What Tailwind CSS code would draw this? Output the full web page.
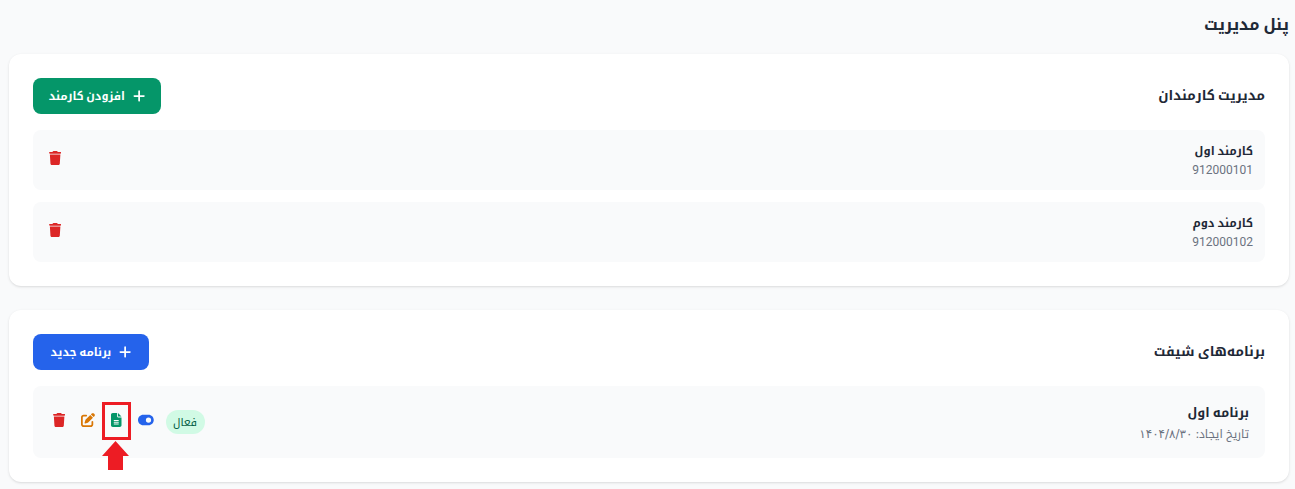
<!DOCTYPE html>
<html lang="fa" dir="rtl">
<head>
<meta charset="utf-8">
<script src="https://cdn.jsdelivr.net/npm/@tailwindcss/browser@4"></script>
</head>
<body class="bg-[#f9fafb] font-['Inter','Noto_Kufi_Arabic','Noto_Sans',sans-serif] text-[#1f2937]">
<div class="relative h-[489px] overflow-hidden pl-[9px] pr-[6px]">
  <h1 class="h-[54px] pt-[10px] text-base leading-7 font-bold">پنل مدیریت</h1>

  <section class="bg-white rounded-xl shadow-sm p-6 mb-6">
    <div class="flex items-center justify-between mb-4">
      <h2 class="text-[13.5px] font-bold mb-[2px]">مدیریت کارمندان</h2>
      <button class="h-9 w-[128px] flex items-center justify-center gap-2 rounded-lg bg-[#059669] text-white text-[11.25px] font-bold">
        <svg class="w-[12.25px] h-[14px]" viewBox="0 0 448 512" fill="currentColor"><path d="M256 80c0-17.7-14.3-32-32-32s-32 14.3-32 32V224H48c-17.7 0-32 14.3-32 32s14.3 32 32 32H192V432c0 17.7 14.3 32 32 32s32-14.3 32-32V288H400c17.7 0 32-14.3 32-32s-14.3-32-32-32H256V80z"/></svg>
        <span>افزودن کارمند</span>
      </button>
    </div>
    <div class="flex flex-col gap-3">
      <div class="h-[60px] flex items-center justify-between rounded-lg bg-[#f9fafb] p-3">
        <div>
          <div class="text-[11.5px] leading-[18px] mb-[2px] font-bold">کارمند اول</div>
          <div class="font-['Roboto',sans-serif] text-xs leading-4 text-[#6b7280]">912000101</div>
        </div>
        <button class="p-1 mb-1 text-[#dc2626]"><svg class="block h-[14px] w-[12.25px]" viewBox="0 0 448 512" fill="currentColor"><path d="M135.2 17.7L128 32H32C14.3 32 0 46.3 0 64S14.3 96 32 96H416c17.7 0 32-14.3 32-32s-14.3-32-32-32H320l-7.2-14.3C307.4 6.8 296.3 0 284.2 0H163.8c-12.1 0-23.2 6.8-28.6 17.7zM416 128H32L53.2 467c1.6 25.3 22.6 45 47.9 45H346.9c25.3 0 46.3-19.7 47.9-45L416 128z"/></svg></button>
      </div>
      <div class="h-[60px] flex items-center justify-between rounded-lg bg-[#f9fafb] p-3">
        <div>
          <div class="text-[11.5px] leading-[18px] mb-[2px] font-bold">کارمند دوم</div>
          <div class="font-['Roboto',sans-serif] text-xs leading-4 text-[#6b7280]">912000102</div>
        </div>
        <button class="p-1 mb-1 text-[#dc2626]"><svg class="block h-[14px] w-[12.25px]" viewBox="0 0 448 512" fill="currentColor"><path d="M135.2 17.7L128 32H32C14.3 32 0 46.3 0 64S14.3 96 32 96H416c17.7 0 32-14.3 32-32s-14.3-32-32-32H320l-7.2-14.3C307.4 6.8 296.3 0 284.2 0H163.8c-12.1 0-23.2 6.8-28.6 17.7zM416 128H32L53.2 467c1.6 25.3 22.6 45 47.9 45H346.9c25.3 0 46.3-19.7 47.9-45L416 128z"/></svg></button>
      </div>
    </div>
  </section>

  <section class="bg-white rounded-xl shadow-sm p-6">
    <div class="flex items-center justify-between mb-4">
      <h2 class="text-[13.5px] font-bold mb-[2px]">برنامه‌های شیفت</h2>
      <button class="h-9 w-[116px] flex items-center justify-center gap-2 rounded-lg bg-[#2563eb] text-white text-[11.25px] font-bold">
        <svg class="w-[12.25px] h-[14px]" viewBox="0 0 448 512" fill="currentColor"><path d="M256 80c0-17.7-14.3-32-32-32s-32 14.3-32 32V224H48c-17.7 0-32 14.3-32 32s14.3 32 32 32H192V432c0 17.7 14.3 32 32 32s32-14.3 32-32V288H400c17.7 0 32-14.3 32-32s-14.3-32-32-32H256V80z"/></svg>
        <span>برنامه جدید</span>
      </button>
    </div>
    <div class="h-[72px] flex items-center justify-between rounded-lg bg-[#f9fafb] p-4">
      <div>
        <div class="text-[12.75px] leading-[22px] mb-[2px] font-bold">برنامه اول</div>
        <div class="text-[11.5px] leading-4 text-[#6b7280]">تاریخ ایجاد: <span class="font-['DejaVu_Sans',sans-serif] text-xs">۱۴۰۴/۸/۳۰</span></div>
      </div>
      <div class="flex items-center gap-2">
        <span class="h-6 w-[39px] rounded-full bg-[#d1fae5] text-[#065f46] text-[11px] leading-6 text-center">فعال</span>
        <button class="p-1 mb-1 text-[#2563eb]"><svg class="block h-[14px] w-[15.75px]" viewBox="0 0 576 512" fill="currentColor"><path d="M192 64C86 64 0 150 0 256S86 448 192 448H384c106 0 192-86 192-192s-86-192-192-192H192zm192 96a96 96 0 1 1 0 192 96 96 0 1 1 0-192z"/></svg></button>
        <button class="p-1 mb-1 text-[#059669]"><svg class="block h-[14px] w-[10.5px]" viewBox="0 0 384 512" fill="currentColor"><path d="M64 0C28.7 0 0 28.7 0 64V448c0 35.3 28.7 64 64 64H320c35.3 0 64-28.7 64-64V160H256c-17.7 0-32-14.3-32-32V0H64zM256 0V128H384L256 0zM112 256H272c8.8 0 16 7.2 16 16s-7.2 16-16 16H112c-8.8 0-16-7.2-16-16s7.2-16 16-16zm0 64H272c8.8 0 16 7.2 16 16s-7.2 16-16 16H112c-8.8 0-16-7.2-16-16s7.2-16 16-16zm0 64H272c8.8 0 16 7.2 16 16s-7.2 16-16 16H112c-8.8 0-16-7.2-16-16s7.2-16 16-16z"/></svg></button>
        <button class="p-1 mb-1 text-[#d97706]"><svg class="block h-[14px] w-[14px]" viewBox="0 0 512 512" fill="currentColor"><path d="M471.6 21.7c-21.9-21.9-57.3-21.9-79.2 0L362.3 51.7l97.9 97.9 30.1-30.1c21.9-21.9 21.9-57.3 0-79.2L471.6 21.7zm-299.2 220c-6.1 6.1-10.8 13.6-13.5 21.9l-29.6 88.8c-2.9 8.6-.6 18.1 5.8 24.6s15.9 8.7 24.6 5.8l88.8-29.6c8.2-2.7 15.7-7.4 21.9-13.5L437.7 172.3 339.7 74.3 172.4 241.7zM96 64C43 64 0 107 0 160V416c0 53 43 96 96 96H352c53 0 96-43 96-96V320c0-17.7-14.3-32-32-32s-32 14.3-32 32v96c0 17.7-14.3 32-32 32H96c-17.7 0-32-14.3-32-32V160c0-17.7 14.3-32 32-32h96c17.7 0 32-14.3 32-32s-14.3-32-32-32H96z"/></svg></button>
        <button class="p-1 mb-1 text-[#dc2626]"><svg class="block h-[14px] w-[12.25px]" viewBox="0 0 448 512" fill="currentColor"><path d="M135.2 17.7L128 32H32C14.3 32 0 46.3 0 64S14.3 96 32 96H416c17.7 0 32-14.3 32-32s-14.3-32-32-32H320l-7.2-14.3C307.4 6.8 296.3 0 284.2 0H163.8c-12.1 0-23.2 6.8-28.6 17.7zM416 128H32L53.2 467c1.6 25.3 22.6 45 47.9 45H346.9c25.3 0 46.3-19.7 47.9-45L416 128z"/></svg></button>
      </div>
    </div>
  </section>

  <!-- annotation over the screenshot -->
  <div class="absolute left-[102px] top-[402px] w-[29px] h-[38px] border-[3px] border-[#ed1c24]"></div>
  <svg class="absolute left-[102px] top-[441px] w-[27px] h-[29px]" viewBox="0 0 27 29" fill="#ed1c24"><path d="M13.5 0L27 15H21V29H6V15H0z"/></svg>
</div>
</body>
</html>
